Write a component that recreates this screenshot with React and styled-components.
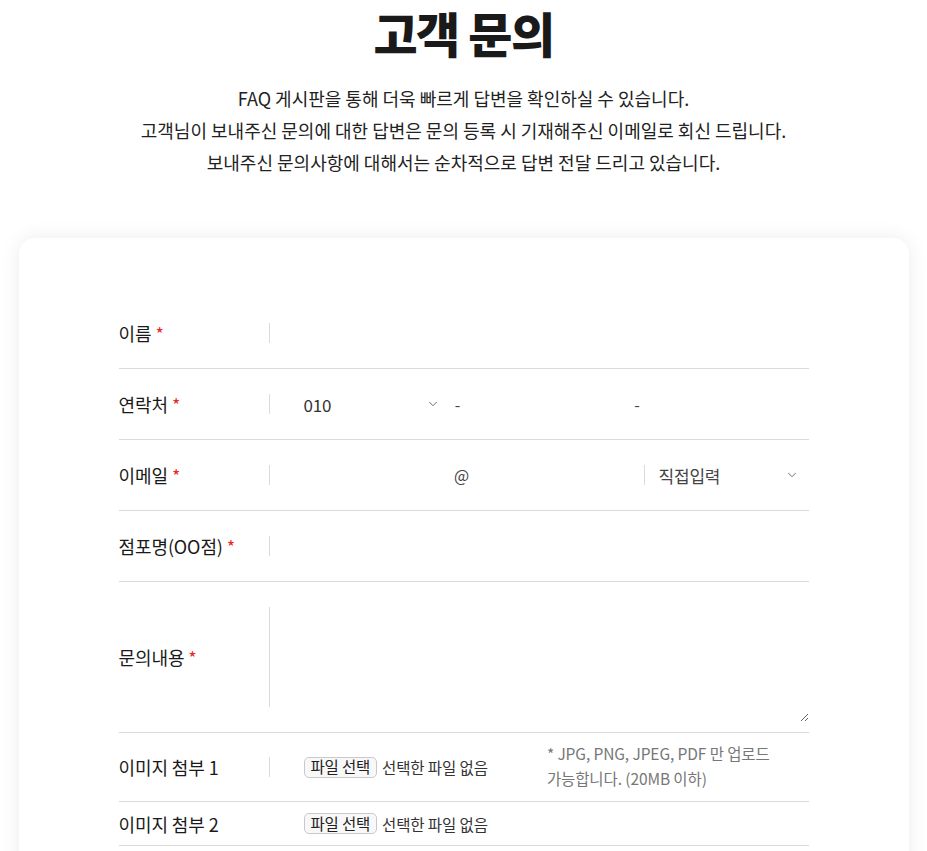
import styled, { createGlobalStyle } from "styled-components"
import { ChevronDown } from "lucide-react"

const GlobalStyle = createGlobalStyle`
body {
  margin: 0;
  background: #ffffff;
  font-family: "Noto Sans CJK KR", "Noto Sans", sans-serif;
  color: #222;
}
* { box-sizing: border-box; }
`

const Page = styled.div`
width: 100%;
display: flex;
flex-direction: column;
align-items: center;
padding-bottom: 60px;
`

const Title = styled.h1`
margin: 0;
font-size: 48px;
line-height: 64px;
font-weight: 800;
letter-spacing: -1.5px;
color: #1a1a1a;
`

const Desc = styled.p`
margin: 18px 0 0;
font-size: 18px;
line-height: 32px;
letter-spacing: 0;
text-align: center;
color: #222;
`

const Card = styled.div`
width: 890px;
margin-top: 60px;
background: #fff;
border-radius: 16px;
box-shadow: 0 0 20px rgba(0, 0, 0, 0.08);
padding: 60px 100px 60px;
`

const Row = styled.div`
display: flex;
align-items: center;
height: ${p => p.$h}px;
border-bottom: 1px solid #dadada;
`

const Label = styled.div`
width: 151px;
height: ${p => p.$line}px;
flex-shrink: 0;
display: flex;
align-items: center;
border-right: 1px solid ${p => (p.$noline ? "transparent" : "#dadada")};
font-size: 18px;
letter-spacing: -0.1px;
color: #1a1a1a;
`

const Star = styled.span`
color: #e8281f;
margin-left: 4px;
`

const Field = styled.div`
flex: 1;
min-width: 0;
display: flex;
align-items: center;
height: 100%;
`

const Input = styled.input`
border: none;
outline: none;
height: 36px;
font-size: 16px;
font-family: inherit;
background: transparent;
min-width: 0;
width: ${p => (p.$w ? `${p.$w}px` : "0")};
flex: ${p => (p.$w ? "none" : "1 1 0")};
`

const Select = styled.div`
width: ${p => p.$w}px;
flex-shrink: 0;
height: ${p => (p.$bordered ? 20 : 36)}px;
display: flex;
align-items: center;
justify-content: space-between;
padding: 0 10px 0 ${p => p.$pl}px;
border-left: ${p => (p.$bordered ? "1px solid #dadada" : "none")};
font-size: 17px;
letter-spacing: -0.2px;
color: ${p => (p.$muted ? "#444" : "#333")};
`

const Sep = styled.span`
width: ${p => p.$w}px;
flex-shrink: 0;
text-align: center;
font-size: 16px;
color: #444;
`

const TextArea = styled.textarea`
flex: 1;
height: 124px;
margin-top: 5px;
border: none;
outline: none;
resize: vertical;
font-family: inherit;
font-size: 16px;
`

const FileBox = styled.div`
display: flex;
align-items: center;
padding-left: 34px;
`

const FileButton = styled.button`
height: 21px;
padding: 0 6px;
border: 1px solid #c9c9c9;
border-radius: 5px;
background: #f8f8f8;
font-family: inherit;
font-size: 15.5px;
letter-spacing: -0.2px;
color: #222;
line-height: 1;
`

const FileText = styled.span`
margin-left: 5px;
font-size: 15.5px;
letter-spacing: -0.1px;
color: #333;
`

const Note = styled.div`
margin-left: 59px;
font-size: 15.5px;
line-height: 25px;
letter-spacing: -0.1px;
color: #777;
margin-top: -3px;
`

const Chevron = () => <ChevronDown size={14} strokeWidth={1.6} color="#666" />

const Required = ({ children }) => (
  <>
    {children}
    <Star>*</Star>
  </>
)

const App = () => {
  return (
    <Page>
      <GlobalStyle />
      <Title>고객 문의</Title>
      <Desc>
        FAQ 게시판을 통해 더욱 빠르게 답변을 확인하실 수 있습니다.
        <br />
        고객님이 보내주신 문의에 대한 답변은 문의 등록 시 기재해주신 이메일로 회신 드립니다.
        <br />
        보내주신 문의사항에 대해서는 순차적으로 답변 전달 드리고 있습니다.
      </Desc>
      <Card>
        <Row $h={71}>
          <Label $line={20}><Required>이름</Required></Label>
          <Field><Input /></Field>
        </Row>
        <Row $h={71}>
          <Label $line={20}><Required>연락처</Required></Label>
          <Field>
            <Select $w={180} $pl={34}>010<Chevron /></Select>
            <Sep $w={16}>-</Sep>
            <Input />
            <Sep $w={16}>-</Sep>
            <Input />
          </Field>
        </Row>
        <Row $h={71}>
          <Label $line={20}><Required>이메일</Required></Label>
          <Field>
            <Input $w={176} />
            <Sep $w={32}>@</Sep>
            <Input />
            <Select $w={165} $pl={14} $bordered $muted>직접입력<Chevron /></Select>
          </Field>
        </Row>
        <Row $h={71}>
          <Label $line={20}><Required>점포명(OO점)</Required></Label>
          <Field><Input /></Field>
        </Row>
        <Row $h={151}>
          <Label $line={100}><Required>문의내용</Required></Label>
          <Field><TextArea /></Field>
        </Row>
        <Row $h={69}>
          <Label $line={20}>이미지 첨부 1</Label>
          <Field>
            <FileBox>
              <FileButton>파일 선택</FileButton>
              <FileText>선택한 파일 없음</FileText>
            </FileBox>
            <Note>
              * JPG, PNG, JPEG, PDF 만 업로드
              <br />
              가능합니다. (20MB 이하)
            </Note>
          </Field>
        </Row>
        <Row $h={44}>
          <Label $line={20} $noline>이미지 첨부 2</Label>
          <Field>
            <FileBox>
              <FileButton>파일 선택</FileButton>
              <FileText>선택한 파일 없음</FileText>
            </FileBox>
          </Field>
        </Row>
      </Card>
    </Page>
  )
}

export default App
